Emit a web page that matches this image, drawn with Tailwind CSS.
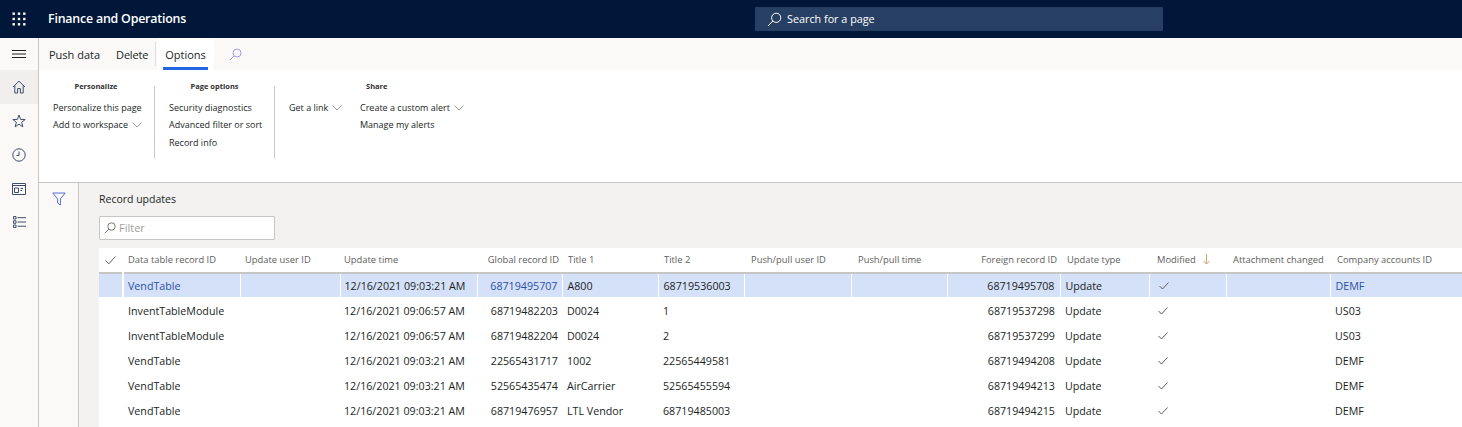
<!DOCTYPE html>
<html lang="en">
<head>
  <meta charset="UTF-8" />
  <title>Record updates - Finance and Operations</title>
  <script src="https://cdn.jsdelivr.net/npm/@tailwindcss/browser@4"></script>
</head>
<body class="w-[1462px] h-[427px] overflow-hidden bg-white text-[#201f1e] font-['Open_Sans',sans-serif]">

  <!-- top bar -->
  <header class="h-[38px] bg-[#00173a] flex items-center relative">
    <div class="w-[38px] flex justify-center">
      <svg width="14" height="14" viewBox="0 0 14 14" fill="#fff">
        <rect x="0.5" y="0.5" width="2.4" height="2.4"/><rect x="5.8" y="0.5" width="2.4" height="2.4"/><rect x="11.1" y="0.5" width="2.4" height="2.4"/>
        <rect x="0.5" y="5.8" width="2.4" height="2.4"/><rect x="5.8" y="5.8" width="2.4" height="2.4"/><rect x="11.1" y="5.8" width="2.4" height="2.4"/>
        <rect x="0.5" y="11.1" width="2.4" height="2.4"/><rect x="5.8" y="11.1" width="2.4" height="2.4"/><rect x="11.1" y="11.1" width="2.4" height="2.4"/>
      </svg>
    </div>
    <span class="ml-[10px] w-[139px] text-white text-[12.4px] font-semibold tracking-[-0.2px] whitespace-nowrap">Finance and Operations</span>
    <div class="ml-[568px] w-[408px] h-[24px] bg-[#283f64] rounded-[1px] flex items-center pl-[12px] text-white text-[10.8px]">
      <svg width="15" height="15" viewBox="0 0 15 15" fill="none" stroke="#fff" stroke-width="1"><circle cx="9.2" cy="5.8" r="4.6"/><path d="M5.8 9 L1 14"/></svg>
      <span class="ml-[5px]">Search for a page</span>
    </div>
  </header>

  <div class="flex h-[389px]">
    <!-- left nav rail -->
    <nav class="w-[39px] shrink-0 bg-[#faf9f8] border-r border-[#c8c6c4] flex flex-col">
      <div class="h-[32px] flex items-center justify-center">
        <svg width="14" height="10" viewBox="0 0 14 10" stroke="#201f1e" stroke-width="1"><path d="M0 1.5H14M0 5H14M0 8.5H14"/></svg>
      </div>
      <div class="h-[34px] bg-[#f0efee] flex items-center justify-center">
        <svg width="14" height="14" viewBox="0 0 14 14" fill="none" stroke="#404d68" stroke-width="1"><path d="M1 7 L7 1.2 L13 7 M2.8 5.5V13H5.6V8.6H8.4V13H11.2V5.5"/></svg>
      </div>
      <div class="h-[34px] flex items-center justify-center">
        <svg width="14" height="14" viewBox="0 0 14 14" fill="none" stroke="#404d68" stroke-width="1"><path d="M7 1 L8.6 5.4 L13.2 5.5 L9.6 8.3 L10.9 12.8 L7 10.2 L3.1 12.8 L4.4 8.3 L0.8 5.5 L5.4 5.4 Z"/></svg>
      </div>
      <div class="h-[34px] flex items-center justify-center">
        <svg width="14" height="14" viewBox="0 0 14 14" fill="none" stroke="#404d68" stroke-width="1"><circle cx="7" cy="7" r="6.2"/><path d="M7 3.5V7.5H4.5"/></svg>
      </div>
      <div class="h-[33px] flex items-center justify-center">
        <svg width="14" height="12" viewBox="0 0 14 12" fill="none" stroke="#404d68" stroke-width="1"><path d="M0.5 0.5H13.5V11.5H0.5Z M0.5 2.5H13.5"/><path d="M2.5 5H6.5V9.5H2.5Z M8.5 5.5H11 M8.5 7.5H10"/></svg>
      </div>
      <div class="h-[34px] flex items-center justify-center">
        <svg width="13" height="12" viewBox="0 0 13 12" fill="none" stroke="#404d68" stroke-width="1"><path d="M0.5 0.5H3V3H0.5Z M0.5 4.8H3V7.3H0.5Z M0.5 9H3V11.5H0.5Z M4.5 1.7H13 M4.5 6H13 M4.5 10.2H13"/></svg>
      </div>
    </nav>

    <main class="flex-1 min-w-0 flex flex-col">
      <!-- action pane tabs -->
      <div class="h-[32px] shrink-0 bg-[#faf9f8] flex text-[11px] relative">
        <span class="ml-[10px] mt-[9px]">Push data</span>
        <span class="ml-[16px] mt-[9px] tracking-[-0.2px]">Delete</span>
        <div class="absolute left-[116px] top-[4px] h-[24px] w-px bg-[#e1dfdd]"></div>
        <div class="absolute left-[118px] top-0 w-[57px] h-[32px] bg-white flex justify-center pt-[9px]">
          Options
          <div class="absolute left-[6px] bottom-0 w-[45px] h-[3px] bg-[#2266e3]"></div>
        </div>
        <svg class="absolute left-[190px] top-[10px]" width="13" height="13" viewBox="0 0 13 13" fill="none" stroke="#a79ee8" stroke-width="1"><circle cx="8" cy="5" r="4"/><path d="M5 8 L1 12"/></svg>
      </div>

      <!-- ribbon -->
      <div class="h-[113px] shrink-0 border-b border-[#c8c6c4] flex items-start pt-[16px] text-[9px]">
        <section class="w-[116px] h-[72px] border-r border-[#c8c6c4]">
          <h3 class="-mt-[6px] text-center font-bold text-[7.5px] leading-[12px] text-[#323130] pr-[1px]">Personalize</h3>
          <ul class="pl-[14px] mt-[7px] leading-[17px]">
            <li>Personalize this page</li>
            <li class="flex items-center gap-[4px]">Add to workspace <svg width="10" height="6" viewBox="0 0 10 6" fill="none" stroke="#a19f9d"><path d="M0.5 0.5L5 5L9.5 0.5"/></svg></li>
          </ul>
        </section>
        <section class="w-[120px] h-[72px] border-r border-[#c8c6c4]">
          <h3 class="-mt-[6px] text-center font-bold text-[7.5px] leading-[12px] text-[#323130]">Page options</h3>
          <ul class="pl-[14px] mt-[7px] leading-[17px]">
            <li>Security diagnostics</li>
            <li>Advanced filter or sort</li>
            <li class="mt-[1px]">Record info</li>
          </ul>
        </section>
        <section class="pl-[14px] flex-1 relative">
          <h3 class="absolute left-[91px] -top-[6px] font-bold text-[7.5px] leading-[12px] text-[#323130]">Share</h3>
          <div class="flex mt-[13px] leading-[17px]">
            <div class="w-[71px] flex items-center gap-[4px] h-[17px]">Get a link <svg width="10" height="6" viewBox="0 0 10 6" fill="none" stroke="#a19f9d"><path d="M0.5 0.5L5 5L9.5 0.5"/></svg></div>
            <ul>
              <li class="flex items-center gap-[4px]">Create a custom alert <svg width="10" height="6" viewBox="0 0 10 6" fill="none" stroke="#a19f9d"><path d="M0.5 0.5L5 5L9.5 0.5"/></svg></li>
              <li>Manage my alerts</li>
            </ul>
          </div>
        </section>
      </div>

      <!-- body -->
      <div class="flex flex-1 min-h-0">
        <div class="w-[40px] shrink-0 bg-[#faf9f8] border-r border-[#c8c6c4] flex justify-center pt-[9px]">
          <svg width="14" height="14" viewBox="0 0 14 14" fill="none" stroke="#5a6fd8" stroke-width="1"><path d="M0.8 1H13.2L8.4 7V13L5.6 11V7Z"/></svg>
        </div>
        <div class="flex-1 min-w-0 bg-[#f3f2f1] pl-[20px] overflow-hidden">
          <h2 class="text-[10.5px] leading-[16px] mt-[8px]">Record updates</h2>
          <div class="w-[176px] h-[24px] mt-[9px] bg-white border border-[#c8c6c4] rounded-[1px] flex items-center pl-[4px] text-[11px] text-[#a19f9d]">
            <svg width="12" height="12" viewBox="0 0 12 12" fill="none" stroke="#797775" stroke-width="1"><circle cx="7.5" cy="4.5" r="3.7"/><path d="M4.8 7.2L0.8 11.2"/></svg>
            <span class="ml-[3px]">Filter</span>
          </div>
          <table id="grid" class="mt-[8px] w-[1363px] table-fixed bg-white border-collapse text-[10.7px]">
            <colgroup>
              <col class="w-[24px]"><col class="w-[117px]"><col class="w-[100px]"><col class="w-[137px]"><col class="w-[85px]"><col class="w-[96px]"><col class="w-[86px]"><col class="w-[107px]"><col class="w-[96px]"><col class="w-[113px]"><col class="w-[89px]"><col class="w-[77px]"><col class="w-[104px]"><col class="w-[132px]">
            </colgroup>
            <thead>
              <tr class="h-[25px] border-b-2 border-[#c8c6c4] text-[9.4px] text-[#605e5c] text-left">
                <th class="font-normal pl-[6px]"><svg width="11" height="9" viewBox="0 0 11 9" fill="none" stroke="#605e5c"><path d="M0.5 4.5L3.8 7.8L10.5 0.5"/></svg></th>
                <th class="font-normal pl-[5px]">Data table record ID</th>
                <th class="font-normal pl-[5px]">Update user ID</th>
                <th class="font-normal pl-[4px]">Update time</th>
                <th class="font-normal text-right pr-[3px]">Global record ID</th>
                <th class="font-normal pl-[6px]">Title 1</th>
                <th class="font-normal pl-[6px]">Title 2</th>
                <th class="font-normal pl-[7px]">Push/pull user ID</th>
                <th class="font-normal pl-[7px]">Push/pull time</th>
                <th class="font-normal text-right pr-[3px]">Foreign record ID</th>
                <th class="font-normal pl-[7px]">Update type</th>
                <th class="font-normal pl-[8px]">
                  <span class="inline-flex items-center gap-[7px]">Modified <svg width="7" height="11" viewBox="0 0 7 11" fill="none" stroke="#d0a06c"><path d="M3.5 0V10M0.5 7L3.5 10L6.5 7"/></svg></span>
                </th>
                <th class="font-normal pl-[7px]">Attachment changed</th>
                <th class="font-normal pl-[7px]">Company accounts ID</th>
              </tr>
            </thead>
            <tbody id="rows"></tbody>
            <tfoot><tr class="h-[25px]"><td colspan="14"></td></tr></tfoot>
          </table>
        </div>
      </div>
    </main>
  </div>

  <script>
    const rows = [
      ["VendTable", "12/16/2021 09:03:21 AM", "68719495707", "A800", "68719536003", "68719495708", "DEMF"],
      ["InventTableModule", "12/16/2021 09:06:57 AM", "68719482203", "D0024", "1", "68719537298", "US03"],
      ["InventTableModule", "12/16/2021 09:06:57 AM", "68719482204", "D0024", "2", "68719537299", "US03"],
      ["VendTable", "12/16/2021 09:03:21 AM", "22565431717", "1002", "22565449581", "68719494208", "DEMF"],
      ["VendTable", "12/16/2021 09:03:21 AM", "52565435474", "AirCarrier", "52565455594", "68719494213", "DEMF"],
      ["VendTable", "12/16/2021 09:03:21 AM", "68719476957", "LTL Vendor", "68719485003", "68719494215", "DEMF"],
    ];
    const check = `<svg width="10" height="8" viewBox="0 0 10 8" fill="none" stroke="#605e5c"><path d="M0.5 4L3.5 7L9.5 0.5"/></svg>`;

    document.getElementById("rows").innerHTML = rows.map((r, i) => {
      const sel = i === 0;
      const link = sel ? "text-[#2b4fa8]" : "";
      const edge = sel ? "border-r border-b-2 border-white" : "";
      return `
      <tr class="h-[25px] ${sel ? "bg-[#d5e1f8]" : ""}">
        <td class="${sel ? "border-r-2 border-b-2 border-white" : ""}"></td>
        <td class="${sel ? "pl-[4px]" : "pl-[5px]"} pt-[1px] ${link} ${edge}">${r[0]}</td>
        <td class="${edge}"></td>
        <td class="pl-[4px] pt-[1px] ${edge}">${r[1]}</td>
        <td class="text-right pr-[4px] pt-[1px] ${link} ${edge}">${r[2]}</td>
        <td class="pl-[5px] pt-[1px] ${edge}">${r[3]}</td>
        <td class="pl-[5px] pt-[1px] ${edge}">${r[4]}</td>
        <td class="${edge}"></td>
        <td class="${edge}"></td>
        <td class="text-right pr-[5px] pt-[1px] ${edge}">${r[5]}</td>
        <td class="pl-[5px] pt-[1px] ${edge}">Update</td>
        <td class="pl-[9px] ${edge}">${check}</td>
        <td class="${edge}"></td>
        <td class="pl-[5px] pt-[1px] ${link} ${sel ? "border-b-2 border-white" : ""}">${r[6]}</td>
      </tr>`;
    }).join("");
  </script>
</body>
</html>
